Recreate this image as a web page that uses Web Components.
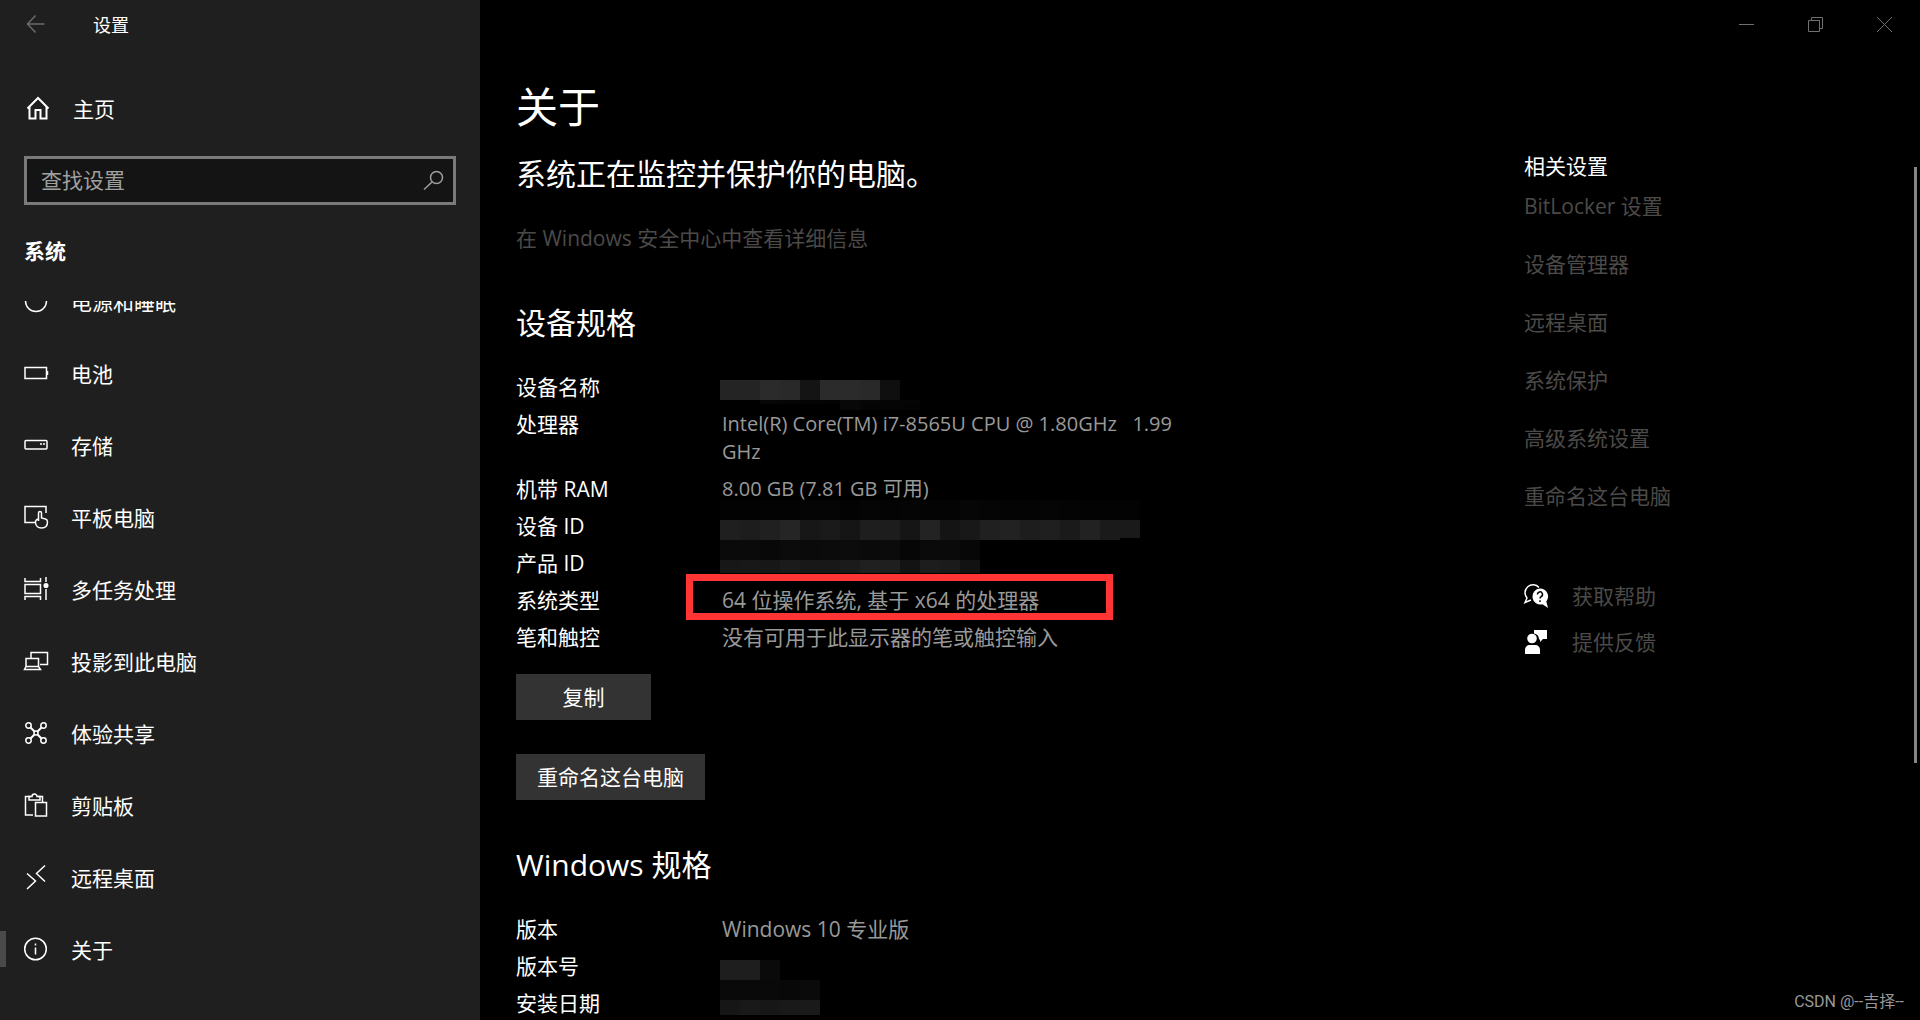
<!DOCTYPE html>
<html lang="zh-CN">
<head>
  <meta charset="UTF-8">
  <meta name="viewport" content="width=device-width, initial-scale=1.0">
  <title>设置</title>
  <style>
    body {
      margin: 0;
      background: #000;
      color: #fff;
      font-family: "Open Sans", "Noto Sans CJK SC", sans-serif;
      font-size: 21px;
      line-height: 28px;
    }
  </style>
</head>
<body>
  <settings-app>
    <settings-sidebar slot="sidebar">
      <nav-item icon="power">电源和睡眠</nav-item>
      <nav-item icon="battery">电池</nav-item>
      <nav-item icon="storage">存储</nav-item>
      <nav-item icon="tablet">平板电脑</nav-item>
      <nav-item icon="multitask">多任务处理</nav-item>
      <nav-item icon="project">投影到此电脑</nav-item>
      <nav-item icon="share">体验共享</nav-item>
      <nav-item icon="clipboard">剪贴板</nav-item>
      <nav-item icon="remote">远程桌面</nav-item>
      <nav-item icon="info" active>关于</nav-item>
    </settings-sidebar>

    <window-controls slot="controls"></window-controls>

    <about-page slot="content"></about-page>

    <related-panel slot="related" titulo="相关设置"></related-panel>

    <water-mark slot="overlay">CSDN @--吉择--</water-mark>
  </settings-app>

  <script>
    const ICONS = {
      back: '<path d="M18.500 12H1.500M9.500 3.500L1.500 12l8 8.500" transform="translate(2 0)"/>',
      home: '<path d="M1.500 12.500L12 2l10.500 10.500M3.500 11v11.500h6V14h5v8.500h6V11" stroke-width="2"/>',
      search: '<circle cx="14.500" cy="8.500" r="6"/><path d="M10 13L2 20.500"/>',
      power: '<circle cx="12" cy="12" r="10.500"/>',
      battery: '<path d="M1 6.500h21.500v11H1zM23.500 10v4"/>',
      storage: '<rect x="1" y="7.500" width="22" height="8.500" rx="1"/><path d="M16 11h2M19 11h2"/>',
      tablet: '<path d="M11 17.500H1v-16h21V8"/><path d="M14.500 16V8a1.500 1.500 0 0 1 3 0v5l4 1c1.500.500 2 1.500 2 3 0 4-2.500 6-6 6s-5.500-2-6-5c-.300-2 .500-3.500 3-4"/>',
      multitask: '<path d="M1 1v3.500h15.500V1M1 7.500h15.500v9H1zM1 23v-3.500h15.500V23M22 0v5M22 12v11"/><circle cx="22" cy="8.500" r="1.800" fill="currentColor"/>',
      project: '<path d="M7 9V3.500h16.500v12H16M2 9.500h12.500v8H2zM.500 20.500h16l-2-3H2z"/>',
      share: '<circle cx="4.500" cy="4.500" r="2.700"/><circle cx="19.500" cy="4.500" r="2.700"/><circle cx="4.500" cy="19.500" r="2.700"/><circle cx="19.500" cy="19.500" r="2.700"/><circle cx="12" cy="12" r="2"/><path d="M6.500 6.500l4 4M17.500 6.500l-4 4M6.500 17.500l4-4M17.500 17.500l-4-4" stroke-width="2"/>',
      clipboard: '<path d="M9 22H1.500V3.500H7M14 3.500h4.500V9"/><path d="M5 3.500v3.500h11V3.500h-3a2.500 2.500 0 0 0-5 0z"/><path d="M11.500 9.500h11V23h-11z"/>',
      remote: '<path d="M3 8.500l8.500 7.500L3 24M21 .500L12.500 8.500 21 16.500" />',
      info: '<circle cx="11.500" cy="12" r="10.800"/><path d="M11.500 10.500v7M11.500 6.500v2"/>',
      help: '<path d="M15 3.500A7.500 7.500 0 1 0 3 14L1 18.500l6-2.500"/><path d="M16 4.500a8 8 0 0 1 6.300 13l1.700 6.500-5.500-3.800A8 8 0 1 1 16 4.500z" fill="currentColor" stroke="none"/><path d="M13.500 10.500a2.500 2.500 0 1 1 3.800 2c-1 .600-1.300 1-1.300 2M16 16.300v1.700" stroke="#000"/>',
      feedback: '<path d="M10 0h13v9h-4l-3 3V9.500h-1C15 6 13.500 4 10 3.500z" fill="currentColor" stroke="none"/><circle cx="8" cy="8.500" r="4.800" fill="currentColor" stroke="none"/><path d="M1 24v-4c0-3 2-5 5-5h5c3 0 5 2 5 5v4z" fill="currentColor" stroke="none"/>'
    };

    const icon = (name, size = 24) => `
      <svg width="${size}" height="${size}" viewBox="0 0 24 24" fill="none" stroke="currentColor"
        stroke-width="1.5" overflow="visible" aria-hidden="true">${ICONS[name]}</svg>`;


    class SettingsApp extends HTMLElement {
      constructor() {
        super();
        this.attachShadow({ mode: "open" });
      }

      connectedCallback() {
        this.shadowRoot.innerHTML = `
          <style>
            :host {
              display: grid;
              grid-template-columns: 25% 1fr;
              height: 100vh;
              overflow: hidden;
              position: relative;
            }
            .ventana {
              display: flex;
              flex-direction: column;
              min-width: 0;
            }
            .columnas {
              display: grid;
              grid-template-columns: 1fr 396px;
              padding-left: 36px;
            }
            .scroll {
              position: absolute;
              top: 167px;
              right: 3px;
              width: 3px;
              height: 596px;
              background: #858585;
            }
          </style>

          <slot name="sidebar"></slot>
          <div class="ventana">
            <slot name="controls"></slot>
            <main class="columnas">
              <slot name="content"></slot>
              <slot name="related"></slot>
            </main>
          </div>
          <div class="scroll"></div>
          <slot name="overlay"></slot>
        `;
      }
    }
    customElements.define("settings-app", SettingsApp);


    class SettingsSidebar extends HTMLElement {
      constructor() {
        super();
        this.attachShadow({ mode: "open" });
      }

      connectedCallback() {
        this.shadowRoot.innerHTML = `
          <style>
            :host {
              display: flex;
              flex-direction: column;
              background: #1f1f1f;
              min-height: 0;
              font-family: "Noto Sans CJK SC", sans-serif;
            }
            svg { flex: none; }
            header {
              display: flex;
              align-items: center;
              gap: 45px;
              height: 48px;
              padding-left: 24px;
              font-size: 18px;
            }
            button {
              display: flex;
              padding: 0;
              border: 0;
              background: none;
              color: #6b6b6b;
            }
            .inicio {
              display: flex;
              align-items: center;
              gap: 23px;
              height: 48px;
              margin: 36px 0 24px;
              padding-left: 26px;
              color: inherit;
              text-decoration: none;
            }
            .buscar {
              display: flex;
              align-items: center;
              margin: 0 24px;
              height: 43px;
              padding: 0 7px 0 14px;
              border: 3px solid #7a7a7a;
              background: #141414;
              color: #a0a0a0;
            }
            input {
              flex: 1;
              min-width: 0;
              padding: 0 0 4px;
              border: 0;
              outline: 0;
              background: none;
              font: inherit;
              color: inherit;
            }
            input::placeholder { color: #a0a0a0; opacity: 1; }
            h2 {
              margin: 31px 24px 37px;
              font-size: 21px;
              line-height: 28px;
              font-weight: 700;
            }
            nav {
              flex: 1;
              min-height: 0;
              overflow: hidden;
            }
            /* the list is scrolled down by half an item */
            .lista { margin-top: -36px; }
          </style>

          <header>
            <button aria-label="返回">${icon("back")}</button>
            <span>设置</span>
          </header>
          <a class="inicio" href="#">${icon("home")}<span>主页</span></a>
          <label class="buscar">
            <input type="text" placeholder="查找设置" aria-label="查找设置">
            ${icon("search")}
          </label>
          <h2>系统</h2>
          <nav><div class="lista"><slot></slot></div></nav>
        `;
      }
    }
    customElements.define("settings-sidebar", SettingsSidebar);


    class NavItem extends HTMLElement {
      constructor() {
        super();
        this.attachShadow({ mode: "open" });
      }

      connectedCallback() {
        this.shadowRoot.innerHTML = `
          <style>
            :host { display: block; }
            a {
              display: flex;
              align-items: center;
              height: 72px;
              color: inherit;
              text-decoration: none;
            }
            a::before {
              content: "";
              width: 6px;
              height: 36px;
              margin-right: 18px;
            }
            :host([active]) a::before { background: #4c4a48; }
            svg { margin-right: 23px; }
          </style>

          <a href="#">${icon(this.getAttribute("icon"))}<slot></slot></a>
        `;
      }
    }
    customElements.define("nav-item", NavItem);


    class WindowControls extends HTMLElement {
      constructor() {
        super();
        this.attachShadow({ mode: "open" });
      }

      connectedCallback() {
        this.shadowRoot.innerHTML = `
          <style>
            :host {
              display: flex;
              justify-content: flex-end;
              height: 48px;
              padding-right: 1px;
            }
            button {
              display: flex;
              align-items: center;
              justify-content: center;
              width: 69px;
              padding: 0;
              border: 0;
              background: none;
              color: #707070;
            }
            svg { fill: none; stroke: currentColor; }
          </style>

          <button aria-label="最小化"><svg width="15" height="15"><path d="M0 7.500h15"/></svg></button>
          <button aria-label="还原"><svg width="15" height="15"><path d="M.5 3.500h11v11H.5zM3.500 3.500v-3h11v11h-3"/></svg></button>
          <button aria-label="关闭"><svg width="15" height="15"><path d="M0 0l15 15M15 0L0 15"/></svg></button>
        `;
      }
    }
    customElements.define("window-controls", WindowControls);


    // Rows of 20px blocks: y, height and the grey level of each block
    const MOSAICOS = {
      nombre: [
        [20, 20, "24 24 2b 29 14 2b 2b 29 0f"],
        [40, 4, "00 00 06 05 04 03 08 06 05 05"],
        [44, 6, "00 00 00 00 00 00 08 05 05 04"]
      ],
      id: [
        [1, 20, "02 02 03 03 05 05 03 05 04 05 04 04 06 05 04 04 05 04 03 03 03"],
        [21, 20, "1f 1d 20 25 17 1a 15 1e 1d 15 23 14 18 20 22 1d 1f 1a 22 1a"],
        [21, 18, "00 00 00 00 00 00 00 00 00 00 00 00 00 00 00 00 00 00 00 00 1a"],
        [41, 20, "0a 0a 08 0b 0a 0b 0c 0a 0b 06 0a 0a 07"],
        [61, 13, "17 18 17 1b 18 18 1b 20 1f 13 1d 1b 12"]
      ],
      version: [
        [21, 20, "1e 1e 0a"],
        [41, 20, "09 09 09 08 0a"],
        [61, 15, "16 19 17 19 1a"]
      ]
    };

    class PixelMask extends HTMLElement {
      constructor() {
        super();
        this.attachShadow({ mode: "open" });
      }

      connectedCallback() {
        const filas = MOSAICOS[this.getAttribute("tipo")] || [];
        const bloques = filas.map(([y, alto, grises]) => grises.split(" ").map((g, i) =>
          g === "00" ? "" : `<rect x="${i * 20}" y="${y}" width="20" height="${alto}" fill="#${g}${g}${g}"/>`
        ).join("")).join("");

        this.shadowRoot.innerHTML = `
          <style>
            :host {
              display: block;
              position: absolute;
              top: -13px;
              left: -2px;
            }
            svg { display: block; }
          </style>

          <svg width="420" height="76" shape-rendering="crispEdges" aria-hidden="true">${bloques}</svg>
        `;
      }
    }
    customElements.define("pixel-mask", PixelMask);


    class SpecTable extends HTMLElement {
      constructor() {
        super();
        this.attachShadow({ mode: "open" });
      }

      set filas(lista) {
        const filas = lista.map((f) => `
          <tr>
            <th scope="row">${f.nombre}</th>
            <td class="${f.clase || ""}">${f.valor || ""}${f.mosaico ? `<pixel-mask tipo="${f.mosaico}"></pixel-mask>` : ""}${f.marcado ? '<div class="marca"></div>' : ""}</td>
          </tr>
        `).join("");

        this.shadowRoot.innerHTML = `
          <style>
            :host { display: block; }
            table {
              width: 100%;
              max-width: 686px;
              table-layout: fixed;
              border-collapse: collapse;
            }
            th, td {
              position: relative;
              padding: 0 0 9px;
              text-align: left;
              vertical-align: top;
              font-weight: 400;
            }
            th { width: 206px; }
            td { color: #999; }
            td.latino { font-size: 20px; }
            tr:last-child > * { padding-bottom: 0; }
            .marca {
              position: absolute;
              top: -12px;
              left: -36px;
              box-sizing: border-box;
              width: 427px;
              height: 46px;
              border: 7px solid #ff3535;
            }
          </style>

          <table><tbody>${filas}</tbody></table>
        `;
      }
    }
    customElements.define("spec-table", SpecTable);


    class AboutPage extends HTMLElement {
      constructor() {
        super();
        this.attachShadow({ mode: "open" });
      }

      connectedCallback() {
        this.shadowRoot.innerHTML = `
          <style>
            :host { display: block; min-width: 0; }
            h1 {
              margin: 31px 0 19px;
              font-size: 42px;
              line-height: 56px;
              font-weight: 400;
            }
            h2 {
              margin: 0 0 30px;
              font-size: 30px;
              line-height: 40px;
              font-weight: 400;
            }
            a {
              display: block;
              margin-bottom: 51px;
              color: #4c4a48;
              text-decoration: none;
            }
            .botones {
              display: flex;
              flex-direction: column;
              align-items: flex-start;
              gap: 34px;
              margin: 23px 0 45px;
            }
            button {
              min-width: 135px;
              height: 46px;
              padding: 0 21px;
              border: 0;
              background: #333;
              color: inherit;
              font: inherit;
            }
          </style>

          <h1>关于</h1>
          <h2>系统正在监控并保护你的电脑。</h2>
          <a href="#">在 Windows 安全中心中查看详细信息</a>

          <h2>设备规格</h2>
          <spec-table id="dispositivo"></spec-table>
          <div class="botones">
            <button>复制</button>
            <button>重命名这台电脑</button>
          </div>

          <h2>Windows 规格</h2>
          <spec-table id="windows"></spec-table>
        `;

        this.shadowRoot.getElementById("dispositivo").filas = [
          { nombre: "设备名称", mosaico: "nombre" },
          { nombre: "处理器", valor: "Intel(R) Core(TM) i7-8565U CPU @ 1.80GHz &nbsp; 1.99<br>GHz", clase: "latino" },
          { nombre: "机带 RAM", valor: "8.00 GB (7.81 GB 可用)", clase: "latino" },
          { nombre: "设备 ID", mosaico: "id" },
          { nombre: "产品 ID", valor: "" },
          { nombre: "系统类型", valor: "64 位操作系统, 基于 x64 的处理器", marcado: true },
          { nombre: "笔和触控", valor: "没有可用于此显示器的笔或触控输入" }
        ];
        this.shadowRoot.getElementById("windows").filas = [
          { nombre: "版本", valor: "Windows 10 专业版" },
          { nombre: "版本号", mosaico: "version" },
          { nombre: "安装日期", valor: "" }
        ];
      }
    }
    customElements.define("about-page", AboutPage);


    class RelatedPanel extends HTMLElement {
      constructor() {
        super();
        this.attachShadow({ mode: "open" });
      }

      connectedCallback() {
        const enlaces = ["BitLocker 设置", "设备管理器", "远程桌面", "系统保护", "高级系统设置", "重命名这台电脑"]
          .map((e) => `<a href="#">${e}</a>`).join("");

        this.shadowRoot.innerHTML = `
          <style>
            :host { display: block; padding-top: 104px; }
            h3 {
              margin: 0 0 12px;
              font-size: 21px;
              line-height: 28px;
              font-weight: 400;
            }
            a { color: #4c4a48; text-decoration: none; }
            .enlaces {
              display: flex;
              flex-direction: column;
              align-items: flex-start;
              gap: 30px;
              margin-bottom: 72px;
            }
            .ayuda {
              display: flex;
              align-items: center;
              gap: 24px;
              margin-bottom: 18px;
            }
          </style>

          <h3>${this.getAttribute("titulo")}</h3>
          <div class="enlaces">${enlaces}</div>
          <div class="ayuda">${icon("help")}<a href="#">获取帮助</a></div>
          <div class="ayuda">${icon("feedback")}<a href="#">提供反馈</a></div>
        `;
      }
    }
    customElements.define("related-panel", RelatedPanel);


    class WaterMark extends HTMLElement {
      constructor() {
        super();
        this.attachShadow({ mode: "open" });
      }

      connectedCallback() {
        this.shadowRoot.innerHTML = `
          <style>
            :host {
              display: block;
              position: absolute;
              right: 16px;
              bottom: 8px;
              font-family: Roboto, "Noto Sans CJK SC", sans-serif;
              font-size: 16px;
              line-height: 20px;
              color: #999;
            }
          </style>

          <slot></slot>
        `;
      }
    }
    customElements.define("water-mark", WaterMark);
  </script>
</body>
</html>
